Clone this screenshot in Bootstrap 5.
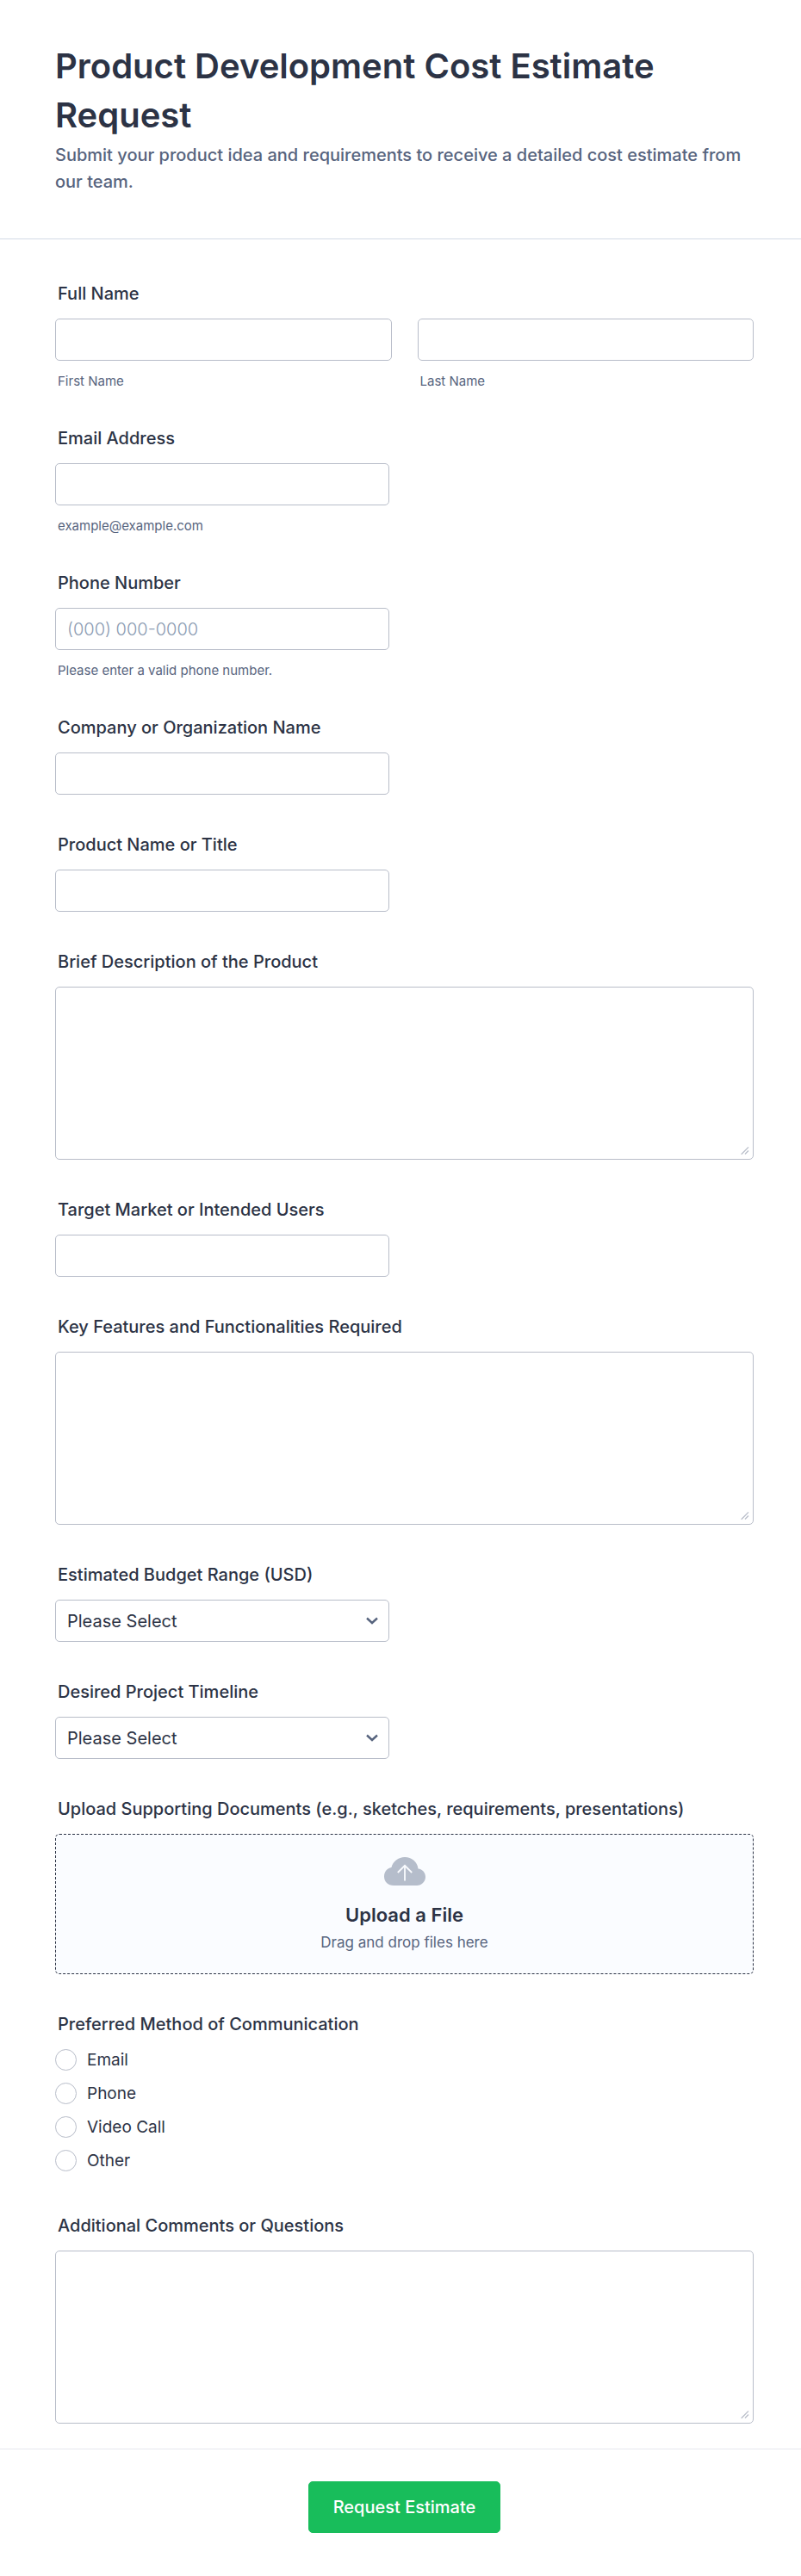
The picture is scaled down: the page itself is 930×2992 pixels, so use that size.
<!DOCTYPE html>
<html lang="en">
<head>
<meta charset="utf-8">
<meta name="viewport" content="width=device-width, initial-scale=1">
<title>Product Development Cost Estimate Request</title>
<link rel="stylesheet" href="https://cdn.jsdelivr.net/npm/bootstrap@5.3.0/dist/css/bootstrap.min.css">
<style>
  :root {
    --ink: #2c3345;
    --muted: #57647e;
    --line: #b8bdc9;
  }
  body {
    font-family: Inter, sans-serif;
    color: var(--ink);
    background: #fff;
  }
  .form-head { padding: 48px 55px 50px 64px; border-bottom: 1px solid #d3dbe6; }
  .form-head h1 { font-size: 40px; line-height: 57px; font-weight: 600; }
  .form-head p { padding-top: 3px; font-size: 20px; line-height: 31px; font-weight: 500; color: var(--muted); }
  .form-fields { padding: 51px 55px 29px 64px; display: grid; gap: 46px; }
  .field-title {
    display: block;
    float: none;
    width: auto;
    margin: 0 0 17px;
    padding-left: 3px;
    font-size: 20px;
    line-height: 24px;
    font-weight: 500;
    color: var(--ink);
  }
  .form-control, .form-select {
    height: 49px;
    padding: 0 13px;
    border: 1px solid var(--line);
    border-radius: 5px;
    font-size: 20px;
    color: var(--ink);
  }
  .form-select {
    background-image: url("data:image/svg+xml,%3Csvg xmlns='http://www.w3.org/2000/svg' viewBox='0 0 14 9'%3E%3Cpath d='M1 1.500l6 5.500 6-5.500' fill='none' stroke='%2357647e' stroke-width='2.4'/%3E%3C/svg%3E");
    background-size: 14px 9px;
    background-position: right 12px center;
  }
  .form-control::placeholder { color: #8b9bb2; font-weight: 300; }
  textarea.form-control { height: 201px; padding: 12px; }
  textarea.form-control::-webkit-resizer {
    background: url("data:image/svg+xml,%3Csvg xmlns='http://www.w3.org/2000/svg' width='15' height='15' viewBox='0 0 15 15'%3E%3Cpath d='M1.700 9.700L10 1.400M6 9.500l4-4' fill='none' stroke='%23b8bdc9' stroke-width='1.300'/%3E%3C/svg%3E") no-repeat;
  }
  .field-short { max-width: 388px; }
  .name-row { --bs-gutter-x: 30px; }
  .field-note {
    display: block;
    margin-top: 16px;
    padding-left: 3px;
    font-size: 15px;
    line-height: 16px;
    color: var(--muted);
  }
  .drop-zone {
    height: 163px;
    border: 1px dashed var(--ink);
    border-radius: 5px;
    background: #fafcff;
    color: var(--ink);
  }
  .drop-title { font-size: 22px; line-height: 28px; font-weight: 600; margin-top: 20px; }
  .drop-note { font-size: 17px; line-height: 22px; color: var(--muted); margin-top: 7px; }
  .choices { display: grid; gap: 14px; padding-bottom: 5px; }
  .choices .form-check { min-height: 0; }
  .choices .form-check-input { width: 25px; height: 25px; border-color: var(--line); }
  .choices .form-check-label { font-size: 19px; line-height: 25px; }
  .form-foot { padding: 37px 55px 48px 64px; border-top: 1px solid #e6e7ef; }
  .btn-send {
    --bs-btn-color: #fff;
    --bs-btn-bg: #18bd5b;
    --bs-btn-border-color: #18bd5b;
    --bs-btn-hover-color: #fff;
    --bs-btn-hover-bg: #16aa52;
    --bs-btn-hover-border-color: #16aa52;
    --bs-btn-border-radius: 5px;
    --bs-btn-font-size: 20px;
    --bs-btn-font-weight: 500;
    --bs-btn-padding-x: 28px;
    height: 60px;
  }
</style>
</head>
<body>
<form>
  <header class="form-head">
    <h1 class="m-0">Product Development Cost Estimate Request</h1>
    <p class="m-0">Submit your product idea and requirements to receive a detailed cost estimate from our team.</p>
  </header>

  <div class="form-fields">
    <fieldset>
      <legend class="field-title">Full Name</legend>
      <div class="row name-row">
        <div class="col-6">
          <input type="text" class="form-control" id="first-name">
          <label class="field-note" for="first-name">First Name</label>
        </div>
        <div class="col-6">
          <input type="text" class="form-control" id="last-name">
          <label class="field-note" for="last-name">Last Name</label>
        </div>
      </div>
    </fieldset>
    <div>
      <label class="field-title" for="email">Email Address</label>
      <input type="email" class="form-control field-short" id="email" aria-describedby="email-note">
      <span class="field-note" id="email-note">example@example.com</span>
    </div>
    <div>
      <label class="field-title" for="phone">Phone Number</label>
      <input type="tel" class="form-control field-short" id="phone" placeholder="(000) 000-0000" aria-describedby="phone-note">
      <span class="field-note" id="phone-note">Please enter a valid phone number.</span>
    </div>
    <div>
      <label class="field-title" for="company">Company or Organization Name</label>
      <input type="text" class="form-control field-short" id="company">
    </div>
    <div>
      <label class="field-title" for="product">Product Name or Title</label>
      <input type="text" class="form-control field-short" id="product">
    </div>
    <div>
      <label class="field-title" for="description">Brief Description of the Product</label>
      <textarea class="form-control d-block" id="description"></textarea>
    </div>
    <div>
      <label class="field-title" for="market">Target Market or Intended Users</label>
      <input type="text" class="form-control field-short" id="market">
    </div>
    <div>
      <label class="field-title" for="features">Key Features and Functionalities Required</label>
      <textarea class="form-control d-block" id="features"></textarea>
    </div>
    <div>
      <label class="field-title" for="budget">Estimated Budget Range (USD)</label>
      <select class="form-select field-short" id="budget"><option>Please Select</option></select>
    </div>
    <div>
      <label class="field-title" for="timeline">Desired Project Timeline</label>
      <select class="form-select field-short" id="timeline"><option>Please Select</option></select>
    </div>
    <div>
      <label class="field-title" for="upload">Upload Supporting Documents (e.g., sketches, requirements, presentations)</label>
      <button type="button" id="upload" class="drop-zone w-100 d-flex flex-column align-items-center justify-content-center p-0">
        <svg width="48" height="33" viewBox="0 0 48 33" aria-hidden="true">
          <path d="M11 33C4.500 33 0 28.500 0 22.500 0 17 3.500 13 8.500 12 10 5 16.500 0 24 0c8 0 14.500 5.500 15.500 13.500C44.500 14 48 18 48 23c0 5.500-4.500 10-10 10z" fill="#b5bdcb"/>
          <path d="M24 27.500V10M15.800 18L24 9.800 32.200 18" fill="none" stroke="#fafcff" stroke-width="1.800"/>
        </svg>
        <span class="drop-title">Upload a File</span>
        <span class="drop-note">Drag and drop files here</span>
      </button>
    </div>
    <fieldset>
      <legend class="field-title">Preferred Method of Communication</legend>
      <div class="choices">
        <div class="form-check d-flex p-0 m-0 gap-2"><input class="form-check-input m-0 me-1" type="radio" name="contact" id="by-email"><label class="form-check-label" for="by-email">Email</label></div>
        <div class="form-check d-flex p-0 m-0 gap-2"><input class="form-check-input m-0 me-1" type="radio" name="contact" id="by-phone"><label class="form-check-label" for="by-phone">Phone</label></div>
        <div class="form-check d-flex p-0 m-0 gap-2"><input class="form-check-input m-0 me-1" type="radio" name="contact" id="by-video"><label class="form-check-label" for="by-video">Video Call</label></div>
        <div class="form-check d-flex p-0 m-0 gap-2"><input class="form-check-input m-0 me-1" type="radio" name="contact" id="by-other"><label class="form-check-label" for="by-other">Other</label></div>
      </div>
    </fieldset>
    <div>
      <label class="field-title" for="comments">Additional Comments or Questions</label>
      <textarea class="form-control d-block" id="comments"></textarea>
    </div>
  </div>

  <footer class="form-foot text-center">
    <button type="submit" class="btn btn-send">Request Estimate</button>
  </footer>
</form>
<script src="https://cdn.jsdelivr.net/npm/bootstrap@5.3.0/dist/js/bootstrap.bundle.min.js"></script>
</body>
</html>
